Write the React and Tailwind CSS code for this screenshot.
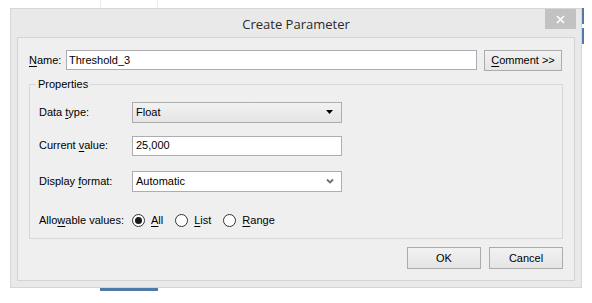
import React from 'react';

const font = { fontFamily: '"Liberation Sans", Arial, sans-serif' };

const Mn = ({ children }) => <span className="underline underline-offset-2">{children}</span>;

const Radio = ({ checked, children }) => (
  <label className="flex items-center gap-[6px]">
    <span className="w-[13px] h-[13px] rounded-full border border-[#333] bg-white flex items-center justify-center">
      {checked && <span className="w-[7px] h-[7px] rounded-full bg-[#1a1a1a]" />}
    </span>
    <span>{children}</span>
  </label>
);

const Field = ({ label, className, children }) => (
  <div className={`flex items-center ${className}`}>
    <div className="w-[102px] pl-[9px]">{label}</div>
    {children}
  </div>
);

export default function App() {
  return (
    <div className="w-[592px] h-[303px] bg-white flex flex-col text-[11px] text-black overflow-hidden" style={font}>
      <div className="h-[8px] flex">
        <div className="ml-[100px] w-px h-full bg-[#ececec]" />
        <div className="ml-[56px] w-px h-full bg-[#ececec]" />
      </div>

      <div className="flex">
        <div className="ml-[10px] w-[572px] h-[280px] border border-[#d6d6d6] bg-[#e9e9e9] flex flex-col">
          <div className="h-[28px] flex items-start relative">
            <div className="flex-1 text-center pt-[6px] text-[13px] text-[#2b2b2b]" style={{ fontFamily: '"Open Sans", "Noto Sans", sans-serif' }}>
              Create Parameter
            </div>
            <div className="absolute right-[5px] top-0 w-[31px] h-[20px] bg-[#c2c2c2] flex items-center justify-center">
              <svg width="9" height="9" viewBox="0 0 9 9">
                <path d="M1 1 L8 8 M8 1 L1 8" stroke="#fff" strokeWidth="1.6" />
              </svg>
            </div>
          </div>

          <div className="mx-[6px] w-[558px] h-[244px] border border-[#d4d4d4] bg-[#efefef] flex flex-col pl-[11px]">
            <div className="mt-[12px] flex items-center h-[20px]">
              <div className="w-[37px]"><Mn>N</Mn>ame:</div>
              <div className="w-[411px] h-[20px] border border-[#abadb3] bg-white flex items-center pl-[2px]">Threshold_3</div>
              <div className="ml-[7px] w-[78px] h-[21px] border border-[#acacac] bg-gradient-to-b from-[#f2f2f2] to-[#e5e5e5] flex items-center justify-center">
                <span><Mn>C</Mn>omment &gt;&gt;</span>
              </div>
            </div>

            <fieldset className="mt-[6px] w-[534px] h-[163px] border border-[#d8d8d8] pt-[9px]">
              <legend className="ml-[6px] px-[2px] text-[11px]">Properties</legend>
              <div className="flex flex-col">
                <Field className="h-[21px]" label={<span>Data <Mn>t</Mn>ype:</span>}>
                  <div className="w-[210px] h-[21px] border border-[#acacac] bg-gradient-to-b from-[#f2f2f2] to-[#e5e5e5] flex items-center justify-between pl-[3px] pr-[8px]">
                    <span>Float</span>
                    <svg width="7" height="4" viewBox="0 0 7 4"><path d="M0 0 H7 L3.5 4 Z" fill="#000" /></svg>
                  </div>
                </Field>
                <Field className="h-[20px] mt-[13px]" label={<span>Current <Mn>v</Mn>alue:</span>}>
                  <div className="w-[210px] h-[20px] border border-[#abadb3] bg-white flex items-center pl-[3px]">25,000</div>
                </Field>
                <Field className="h-[21px] mt-[15px]" label={<span>Display <Mn>f</Mn>ormat:</span>}>
                  <div className="w-[210px] h-[21px] border border-[#abadb3] bg-white flex items-center justify-between pl-[3px] pr-[7px]">
                    <span>Automatic</span>
                    <svg width="8" height="6" viewBox="0 0 8 6"><path d="M1 1.5 L4 4.5 L7 1.5" stroke="#707070" strokeWidth="1.8" fill="none" /></svg>
                  </div>
                </Field>
                <div className="flex items-center h-[20px] pl-[9px] mt-[19px]">
                  <div className="w-[93px]">Allo<Mn>w</Mn>able values:</div>
                  <div className="flex items-center gap-[12px]">
                    <Radio checked><Mn>A</Mn>ll</Radio>
                    <Radio><Mn>L</Mn>ist</Radio>
                    <Radio><Mn>R</Mn>ange</Radio>
                  </div>
                </div>
              </div>
            </fieldset>

            <div className="mt-[8px] w-[534px] flex justify-end gap-[8px]">
              <div className="w-[74px] h-[22px] border border-[#acacac] bg-gradient-to-b from-[#f2f2f2] to-[#e5e5e5] flex items-center justify-center">OK</div>
              <div className="w-[74px] h-[22px] border border-[#acacac] bg-gradient-to-b from-[#f2f2f2] to-[#e5e5e5] flex items-center justify-center">Cancel</div>
            </div>
          </div>
        </div>

        <div className="flex flex-col">
          <div className="w-[2px] h-[16px] bg-[#4f79a8]" />
          <div className="w-[2px] h-[4px]" />
          <div className="w-[2px] h-[16px] bg-[#4f79a8]" />
        </div>
      </div>

      <div className="h-[3px] flex">
        <div className="ml-[100px] w-[58px] h-[3px] bg-[#4f79a8]" />
      </div>
    </div>
  );
}
